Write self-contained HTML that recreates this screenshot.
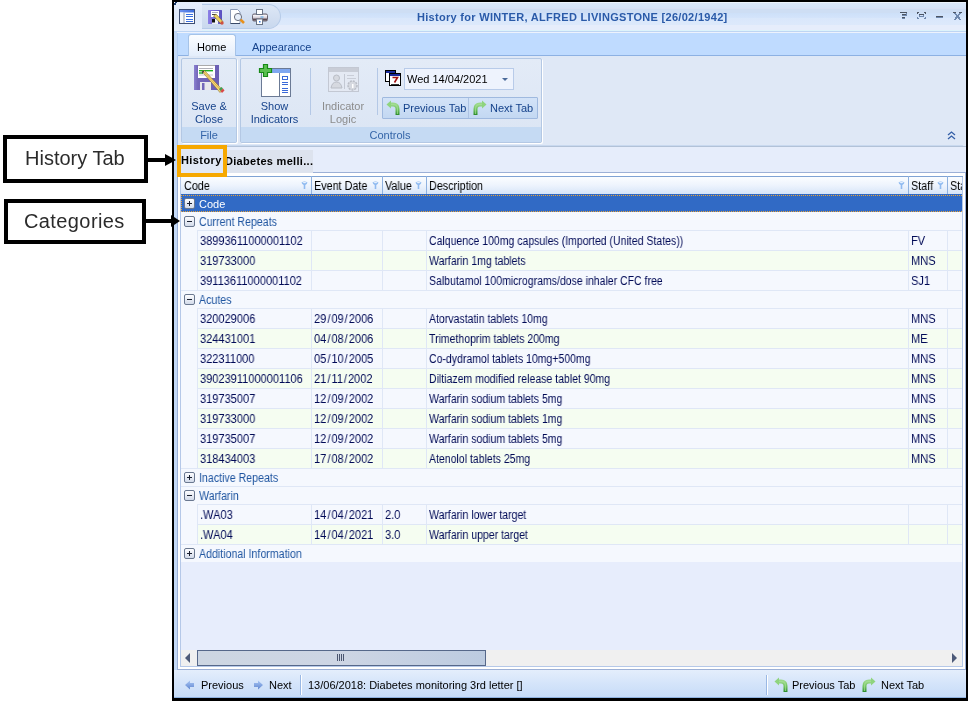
<!DOCTYPE html>
<html><head><meta charset="utf-8">
<style>
*{margin:0;padding:0;box-sizing:border-box}
html,body{width:968px;height:701px;overflow:hidden;background:#fff;font-family:"Liberation Sans",sans-serif;font-size:11px;color:#000}
.a{position:absolute}
.t{position:absolute;white-space:pre;line-height:12px;will-change:transform}
.box{position:absolute;border:4px solid #000;background:#fff}
.lbl{position:absolute;font-size:19px;color:#2b2b2b;white-space:pre;line-height:20px;will-change:transform}
#win{position:absolute;left:172px;top:0;width:796px;height:701px;background:#000}
#title{position:absolute;left:174px;top:2px;width:792px;height:29px;background:linear-gradient(#eef4fd 0,#eef4fd 1px,#dce8fa 1px,#d5e4f9 6px,#dae0f5 6px,#dae0f5 7px,#cedef4 7px,#cedef4 11px,#cde0f9 11px,#d4e4fb 16px,#d9e7fb 16px,#dde9fb 23px,#e6edfb 23px,#e6edfb 28px,#ddf3fb 28px)}
#tabstrip{position:absolute;left:174px;top:31px;width:792px;height:25px;background:#bfdbff;border-top:1px solid #bed5f3;border-bottom:1px solid #8db1e3}
#ribbon{position:absolute;left:174px;top:56px;width:792px;height:90px;background:#dfe8f6}
#tabrow{position:absolute;left:174px;top:146px;width:792px;height:30px;background:#e4ebf7}
#gridarea{position:absolute;left:174px;top:176px;width:792px;height:493px;background:#c5d8f2}
#status{position:absolute;left:174px;top:670px;width:792px;height:28px;background:linear-gradient(#e4eefc,#d4e4fa 14px,#c6dbf7 28px);border-bottom:1px solid #8fb2e0}
.grp{position:absolute;border:1px solid #b4c8e4;border-radius:2px;background:linear-gradient(#e3ebf7,#dbe5f4);box-shadow:1px 1px 0 #fff}
.gcap{position:absolute;left:0;right:0;bottom:0;height:15px;background:#c5daf3;color:#3465a8;text-align:center;line-height:16px;will-change:transform}
.blue{color:#15428b}
.hdr{position:absolute;top:177px;height:17px;background:linear-gradient(#fbfdff,#eef4fd 8px,#d7e5f8 17px)}
.hsep{position:absolute;top:176px;width:1px;height:19px;background:#8fb1df}
.funnel{position:absolute;top:181px;width:7px;height:8px}
.selrow{left:181px;width:781px;height:17px;background:#316ac5;border-top:1px dotted #e8a33a;border-bottom:1px dotted #e8a33a;border-left:1px dotted #e8a33a}
.hl{height:1px;background:#dfe7f6}
.vl{width:1px;height:20px;background:#dfe7f6}
.pm{position:absolute;width:11px;height:11px;border:1px solid #6a7890;border-radius:2px;background:linear-gradient(#fdfdff,#d3dbea)}
.pm .h{position:absolute;left:2px;top:4px;width:5px;height:1px;background:#1a2030}
.pm .v{position:absolute;left:4px;top:2px;width:1px;height:5px;background:#1a2030}
.gt{color:#1f55a0;font-size:12px;transform:scaleX(0.885);transform-origin:0 0}
.dt{color:#000a56;font-size:12px;transform-origin:0 0}
.sl{margin:0 1.1px}
.ht{font-size:12px;transform:scaleX(0.9);transform-origin:0 0;color:#000}
</style></head><body>

<!-- window frame -->
<div id="win"></div>
<div class="a" style="left:174px;top:31px;width:792px;height:667px;background:#c4d9f6"></div>
<div id="title"></div>
<!-- QAT -->
<div class="a" style="left:174px;top:2px;width:28px;height:29px;background:linear-gradient(#e8f0fc,#dfe9f9 14px,#e6effc)"></div>
<div class="a" style="left:202px;top:4px;width:79px;height:25px;border-radius:0 13px 13px 0;border:1px solid #b6cbe8;border-left:none;background:linear-gradient(#dde7f6,#d3dff1 12px,#c9d8ee)"></div>
<!-- app icon -->
<svg class="a" style="left:179px;top:9px" width="17" height="16" viewBox="0 0 17 16">
<defs><linearGradient id="gApp" x1="0" y1="0" x2="1" y2="0"><stop offset="0" stop-color="#6e90ee"/><stop offset="1" stop-color="#3d6ee0"/></linearGradient></defs>
<rect x="0.5" y="0.5" width="15" height="14" fill="#fff" stroke="#3e4e72"/>
<rect x="1" y="1" width="14" height="2.5" fill="url(#gApp)"/>
<rect x="1" y="3.5" width="3.5" height="10.5" fill="#f4f6fa"/>
<line x1="5" y1="3.5" x2="5" y2="14" stroke="#8a96ae"/>
<rect x="7" y="5" width="7" height="1" fill="#3a6fe0"/>
<rect x="7" y="7" width="7" height="1" fill="#3a6fe0"/>
<rect x="7" y="10" width="7" height="1" fill="#3a6fe0"/>
<rect x="7" y="12" width="7" height="1" fill="#3a6fe0"/>
</svg>
<svg class="a" style="left:174px;top:2px" width="3" height="3"><rect x="1" y="0" width="2" height="1" fill="#1c3a6a"/><rect x="0" y="1" width="2" height="2" fill="#1c3a6a"/><rect x="0" y="0" width="1" height="1" fill="#fff"/></svg>
<!-- qat floppy -->
<svg class="a" style="left:207px;top:9px" width="18" height="17" viewBox="0 0 18 17">
<defs><linearGradient id="gF" x1="0" y1="0" x2="1" y2="0"><stop offset="0" stop-color="#8c80e6"/><stop offset="1" stop-color="#5a4ec0"/></linearGradient></defs>
<rect x="1" y="1" width="14" height="14" rx="0.5" fill="url(#gF)"/>
<rect x="4" y="2" width="8" height="6" fill="#fff"/>
<rect x="5" y="3.2" width="6" height="0.8" fill="#9a9ab8"/>
<rect x="5" y="5" width="4" height="1" fill="#444"/>
<rect x="5" y="10" width="6" height="5" fill="#eef0f6"/>
<rect x="5" y="10" width="3" height="3.5" fill="#111"/>
<polygon points="6.5,7 9,5 16,12.5 13.5,14.5" fill="#ecd060" stroke="#5a4a20" stroke-width="0.5"/>
<circle cx="15" cy="14" r="1.7" fill="#d05040"/>
</svg>
<!-- qat preview -->
<svg class="a" style="left:230px;top:9px" width="16" height="16" viewBox="0 0 16 16">
<polygon points="0.5,0.5 7.5,0.5 10,3 10,14.5 0.5,14.5" fill="#fff" stroke="#8a9ab8"/>
<line x1="0.5" y1="14.5" x2="10" y2="14.5" stroke="#3a4a68"/>
<circle cx="8" cy="8" r="3.6" fill="#e6eef9" stroke="#6a7080" stroke-width="1"/>
<line x1="10.6" y1="10.6" x2="14" y2="14" stroke="#e8901a" stroke-width="2.6"/>
</svg>
<!-- qat printer -->
<svg class="a" style="left:252px;top:9px" width="16" height="16" viewBox="0 0 16 16">
<rect x="0.5" y="5" width="15" height="7" rx="1.5" fill="#d8d2da" stroke="#6a6470"/>
<rect x="1" y="6" width="14" height="1.5" fill="#f4f2f6"/>
<rect x="1" y="9.5" width="14" height="2" fill="#5a4a52"/>
<rect x="4.5" y="0.5" width="6" height="5" fill="#fff" stroke="#6a7486"/>
<rect x="8.5" y="7.5" width="3" height="1" fill="#4aa0e8"/>
<rect x="4.5" y="10" width="6" height="5.5" fill="#fff" stroke="#6a7486"/>
<rect x="7" y="12" width="1.5" height="1.5" fill="#3a7ae0"/>
</svg>
<!-- title text -->
<div class="t" style="left:417px;top:11px;font-weight:bold;color:#2a5aa8;font-size:11px;letter-spacing:0.3px">History for WINTER, ALFRED LIVINGSTONE [26/02/1942]</div>
<!-- window buttons -->
<svg class="a" style="left:896px;top:10px" width="70" height="14" viewBox="0 0 70 14" shape-rendering="crispEdges">
<g fill="#4d5563">
<rect x="4" y="2" width="7" height="1"/><rect x="6" y="4" width="4" height="1"/><rect x="6" y="7" width="3" height="1"/>
<rect x="21" y="2" width="2" height="1"/><rect x="21" y="3" width="1" height="1"/><rect x="28" y="2" width="2" height="1"/><rect x="29" y="3" width="1" height="1"/>
<rect x="23" y="4" width="5" height="1"/>
<rect x="40" y="6" width="7" height="1"/>
<rect x="57" y="2" width="3" height="1"/><rect x="63" y="2" width="3" height="1"/>
</g>
<g fill="#6f88ad">
<rect x="10" y="3" width="1" height="3"/><rect x="6" y="5" width="5" height="1"/><rect x="6" y="8" width="3" height="1"/>
<rect x="21" y="7" width="1" height="1"/><rect x="21" y="8" width="2" height="1"/><rect x="29" y="7" width="1" height="1"/><rect x="28" y="8" width="2" height="1"/>
<rect x="23" y="5" width="1" height="2"/><rect x="27" y="5" width="1" height="2"/><rect x="23" y="6" width="5" height="1"/>
<rect x="40" y="7" width="7" height="1"/>
<path d="M58,3 h2 l1.5,2 l1.5,-2 h2 l-2.5,3 l3,4 h-2.5 l-1.5,-2 l-1.5,2 h-2.5 l3,-4 z"/>
</g>
</svg>

<div id="tabstrip"></div>
<!-- left frame strip -->
<div class="a" style="left:177px;top:32px;width:789px;height:1px;background:#edf2fc"></div>
<div class="a" style="left:174px;top:32px;width:3px;height:637px;background:#c4d9f6"></div>
<div class="a" style="left:177px;top:33px;width:1px;height:23px;background:#b0cdf5"></div>
<div class="a" style="left:963px;top:56px;width:3px;height:613px;background:#c8dbf4"></div>
<!-- Home tab -->
<div class="a" style="left:188px;top:34px;width:48px;height:22px;border:1px solid #a6c3e8;border-bottom:none;border-radius:3px 3px 0 0;background:linear-gradient(#fbfdff,#eef4fd 60%,#e3edfb)"></div>
<div class="t" style="left:197px;top:41px">Home</div>
<div class="t blue" style="left:252px;top:41px">Appearance</div>

<div class="a" style="left:178px;top:56px;width:788px;height:90px;background:#dfe8f6"></div>
<div class="a" style="left:177px;top:56px;width:1px;height:90px;background:#a9c5ee"></div>
<!-- File group -->
<div class="grp" style="left:181px;top:58px;width:56px;height:85px"><div class="gcap">File</div></div>
<!-- Controls group -->
<div class="grp" style="left:240px;top:58px;width:302px;height:85px"><div class="gcap" style="padding-right:2px">Controls</div></div>
<!-- save & close icon -->
<svg class="a" style="left:193px;top:64px" width="32" height="32" viewBox="0 0 32 32">
<defs><linearGradient id="gS" x1="0" y1="0" x2="1" y2="0"><stop offset="0" stop-color="#8a80d0"/><stop offset="0.15" stop-color="#7468ba"/><stop offset="1" stop-color="#6a5eb4"/></linearGradient></defs>
<rect x="1" y="1" width="25" height="25" fill="url(#gS)"/>
<rect x="5" y="1" width="17" height="13" fill="#fff"/>
<rect x="5" y="1" width="17" height="1" fill="#aaa"/>
<rect x="6" y="4" width="14" height="1" fill="#b0b0b8"/>
<rect x="6" y="6" width="14" height="1.4" fill="#20b020"/>
<rect x="6" y="8.3" width="4" height="1.4" fill="#20b020"/>
<rect x="6" y="10.5" width="14" height="1" fill="#c8c8d0"/>
<rect x="7" y="18" width="11" height="8" fill="#e8e8ec"/>
<rect x="9" y="19" width="2.5" height="7" fill="#7468ba"/>
<polygon points="9,7.5 11.5,6.5 29.5,26 27,28.5" fill="#f2d878" stroke="#8a6a28" stroke-width="0.6"/>
<line x1="11" y1="8" x2="28" y2="26.5" stroke="#e0a840" stroke-width="0.8"/>
<polygon points="26,25 28.6,23 30,24.6 27.5,27" fill="#40a050"/>
<polygon points="27.5,27 30,24.6 31.5,26.5 29,29" fill="#d84848"/>
<polygon points="9,7.5 11.5,6.5 9.5,10" fill="#333"/>
</svg>
<div class="t blue" style="left:191px;top:100px;line-height:13px;text-align:center;width:36px">Save &amp;
Close</div>

<!-- show indicators icon -->
<svg class="a" style="left:258px;top:63px" width="34" height="34" viewBox="0 0 34 34">
<rect x="3.5" y="5.5" width="29" height="28" fill="#fff" stroke="#6b7a95"/>
<rect x="4" y="6" width="28" height="4" fill="#7fa7f0"/>
<line x1="21.5" y1="10" x2="21.5" y2="33" stroke="#6b7a95"/>
<rect x="24.5" y="13.5" width="5" height="3" fill="#fff" stroke="#3b6ad8"/>
<rect x="24" y="19" width="6" height="1" fill="#3b6ad8"/>
<rect x="24" y="21" width="6" height="1" fill="#3b6ad8"/>
<rect x="24" y="25" width="6" height="1" fill="#3b6ad8"/>
<rect x="24" y="27" width="6" height="1" fill="#3b6ad8"/>
<rect x="24" y="29" width="6" height="1" fill="#3b6ad8"/>
<path d="M5.5,1.5 h4 v4 h4 v4 h-4 v4 h-4 v-4 h-4 v-4 h4 z" fill="#5cc050" stroke="#178a17" stroke-width="1.2"/>
</svg>
<div class="t blue" style="left:249px;top:100px;line-height:13px;text-align:center;width:51px">Show
Indicators</div>
<div class="a" style="left:310px;top:68px;width:1px;height:47px;background:#b4c8e6"></div>
<!-- indicator logic icon -->
<svg class="a" style="left:327px;top:66px" width="34" height="28" viewBox="0 0 34 28">
<rect x="1.5" y="1.5" width="30" height="24" fill="#e4e9f3" stroke="#c3c8d3"/>
<rect x="2" y="2" width="29" height="4" fill="#c9cdd7"/>
<circle cx="9.5" cy="12" r="3" fill="#d6d9e0" stroke="#b9bdc6"/>
<path d="M4,22 q1,-6 5.5,-6 q4.5,0 5.5,6 z" fill="#d6d9e0" stroke="#b9bdc6"/>
<line x1="17.5" y1="8" x2="17.5" y2="23" stroke="#c3c8d3"/>
<rect x="20" y="9" width="7" height="1" fill="#c9cdd7"/>
<rect x="20" y="12" width="9" height="1" fill="#c9cdd7"/>
<circle cx="25.5" cy="19.5" r="4.5" fill="#d6d9e0" stroke="#b9bdc6" stroke-width="1.5" stroke-dasharray="2 1"/>
<rect x="25" y="18" width="1.5" height="4" fill="#fff"/>
</svg>
<div class="t" style="left:320px;top:100px;line-height:13px;text-align:center;width:46px;color:#8c8c8c">Indicator
Logic</div>
<div class="a" style="left:377px;top:68px;width:1px;height:47px;background:#b4c8e6"></div>
<!-- calendar icon -->
<svg class="a" style="left:385px;top:70px" width="16" height="16" viewBox="0 0 16 16">
<rect x="0.5" y="0.5" width="10" height="11" fill="#fff" stroke="#000"/>
<rect x="1" y="1" width="9" height="2" fill="#1a2a9a"/>
<rect x="4.5" y="3.5" width="11" height="12" fill="#fff" stroke="#000"/>
<rect x="5" y="4" width="10" height="2" fill="#1a2a9a"/>
<path d="M7.5,7.5 h5 l-3,5" fill="none" stroke="#a01010" stroke-width="1.6"/>
<rect x="6" y="14" width="8" height="0.8" fill="#000"/>
</svg>
<div class="a" style="left:404px;top:68px;width:110px;height:22px;border:1px solid #b8cbe9;background:#eef3fd"></div>
<div class="t" style="left:407px;top:73px">Wed 14/04/2021</div>
<svg class="a" style="left:502px;top:78px" width="6" height="3"><polygon points="0,0 6,0 3,3" fill="#4a6a9a"/></svg>
<!-- prev/next tab button group -->
<div class="a" style="left:382px;top:97px;width:156px;height:22px;border:1px solid #9fb9df;background:linear-gradient(#d3e3f8,#c3d8f2);border-radius:1px"></div>
<div class="a" style="left:468px;top:98px;width:1px;height:20px;background:#adc3e3"></div>
<svg class="a" style="left:386px;top:100px" width="14" height="16" viewBox="0 0 14 16">
<defs><linearGradient id="gA" x1="0" y1="0" x2="0" y2="1"><stop offset="0" stop-color="#9ad88a"/><stop offset="0.5" stop-color="#6cc05c"/><stop offset="1" stop-color="#2a8a2a"/></linearGradient></defs>
<path d="M11.5,15 V9 Q11.5,4.5 7,4.5 H4.5" fill="none" stroke="url(#gA)" stroke-width="4"/>
<path d="M11.5,14 V9 Q11.5,4.5 7,4.5 H5" fill="none" stroke="#a8e098" stroke-width="1.2" opacity="0.7"/>
<polygon points="0.5,4.5 5,0.5 5,8.5" fill="#8fd47e"/>
</svg>
<div class="t blue" style="left:403px;top:102px">Previous Tab</div>
<svg class="a" style="left:473px;top:100px" width="14" height="16" viewBox="0 0 14 16">
<defs><linearGradient id="gB" x1="0" y1="0" x2="0" y2="1"><stop offset="0" stop-color="#9ad88a"/><stop offset="0.5" stop-color="#6cc05c"/><stop offset="1" stop-color="#2a8a2a"/></linearGradient></defs>
<path d="M2.5,15 V9 Q2.5,4.5 7,4.5 H9.5" fill="none" stroke="url(#gB)" stroke-width="4"/>
<path d="M2.5,14 V9 Q2.5,4.5 7,4.5 H9" fill="none" stroke="#a8e098" stroke-width="1.2" opacity="0.7"/>
<polygon points="13.5,4.5 9,0.5 9,8.5" fill="#8fd47e"/>
</svg>
<div class="t blue" style="left:490px;top:102px">Next Tab</div>
<!-- collapse chevron -->
<svg class="a" style="left:947px;top:131px" width="9" height="9" viewBox="0 0 9 9">
<path d="M1,4 L4.5,1 L8,4 M1,8 L4.5,5 L8,8" fill="none" stroke="#3560a8" stroke-width="1.3"/>
</svg>
<!-- ribbon bottom -->
<div class="a" style="left:178px;top:145px;width:785px;height:1px;background:#c9d9ef"></div>

<!-- tab row -->
<div class="a" style="left:177px;top:146px;width:789px;height:1px;background:#b2c2d8"></div>
<div class="a" style="left:177px;top:147px;width:789px;height:25px;background:#e6edfb"></div>
<div class="a" style="left:177px;top:172px;width:789px;height:498px;background:#fff;border:1px solid #9cb0d6"></div>
<div class="a" style="left:181px;top:149px;width:46px;height:25px;background:#e1e8f5"></div>
<div class="a" style="left:227px;top:150px;width:86px;height:23px;background:#dde3ee"></div>
<div class="t" style="left:181px;top:154px;font-weight:bold;letter-spacing:0.4px">History</div>
<div class="t" style="left:225px;top:155px;font-weight:bold;letter-spacing:0.3px">Diabetes melli...</div>
<!-- grid -->
<div class="a" style="left:180px;top:176px;width:783px;height:491px;background:#e7edfc;border:1px solid #b5c8e8"></div>
<div class="a" style="left:181px;top:177px;width:781px;height:385px;background:#f5f8fe"></div>
<!-- header -->
<div class="a" style="left:180px;top:176px;width:783px;height:1px;background:#7fa3d4"></div>
<div class="hdr" style="left:181px;width:781px"></div>
<div class="hsep" style="left:311px"></div>
<div class="hsep" style="left:382px"></div>
<div class="hsep" style="left:426px"></div>
<div class="hsep" style="left:908px"></div>
<div class="hsep" style="left:947px"></div>
<div class="t ht" style="left:184px;top:180px">Code</div>
<div class="t ht" style="left:314px;top:180px">Event Date</div>
<div class="t ht" style="left:385px;top:180px">Value</div>
<div class="t ht" style="left:429px;top:180px">Description</div>
<div class="t ht" style="left:911px;top:180px">Staff</div>
<div class="a" style="left:948px;top:177px;width:14px;height:17px;overflow:hidden"><div class="t ht" style="left:2px;top:3px">Status</div></div>
<svg class="funnel" style="left:301px" viewBox="0 0 7 8"><path d="M0.5,1.5 Q3.5,-0.5 6.5,1.5 Q6,3 4.3,4 V8 H2.7 V4 Q1,3 0.5,1.5 Z" fill="#8fbaf0"/><ellipse cx="3.5" cy="1.6" rx="2" ry="0.7" fill="#eaf3ff"/></svg>
<svg class="funnel" style="left:372px" viewBox="0 0 7 8"><path d="M0.5,1.5 Q3.5,-0.5 6.5,1.5 Q6,3 4.3,4 V8 H2.7 V4 Q1,3 0.5,1.5 Z" fill="#8fbaf0"/><ellipse cx="3.5" cy="1.6" rx="2" ry="0.7" fill="#eaf3ff"/></svg>
<svg class="funnel" style="left:415px" viewBox="0 0 7 8"><path d="M0.5,1.5 Q3.5,-0.5 6.5,1.5 Q6,3 4.3,4 V8 H2.7 V4 Q1,3 0.5,1.5 Z" fill="#8fbaf0"/><ellipse cx="3.5" cy="1.6" rx="2" ry="0.7" fill="#eaf3ff"/></svg>
<svg class="funnel" style="left:898px" viewBox="0 0 7 8"><path d="M0.5,1.5 Q3.5,-0.5 6.5,1.5 Q6,3 4.3,4 V8 H2.7 V4 Q1,3 0.5,1.5 Z" fill="#8fbaf0"/><ellipse cx="3.5" cy="1.6" rx="2" ry="0.7" fill="#eaf3ff"/></svg>
<svg class="funnel" style="left:937px" viewBox="0 0 7 8"><path d="M0.5,1.5 Q3.5,-0.5 6.5,1.5 Q6,3 4.3,4 V8 H2.7 V4 Q1,3 0.5,1.5 Z" fill="#8fbaf0"/><ellipse cx="3.5" cy="1.6" rx="2" ry="0.7" fill="#eaf3ff"/></svg>

<div class="a" style="left:181px;top:194px;width:781px;height:18px;background:#316ac5"></div>
<div class="a selrow" style="top:195px"></div>
<div class="pm" style="left:184px;top:198px"><div class="h"></div><div class="v"></div></div>
<div class="t" style="left:199px;top:198px;color:#fff">Code</div>
<div class="pm" style="left:184px;top:216px"><div class="h"></div></div>
<div class="t gt" style="left:199px;top:216px">Current Repeats</div>
<div class="a" style="left:198px;top:231px;width:764px;height:19px;background:#f5f8fe"></div>
<div class="a hl" style="left:197px;top:230px;width:765px"></div>
<div class="a vl" style="left:197px;top:230px"></div>
<div class="a vl" style="left:311px;top:230px"></div>
<div class="a vl" style="left:382px;top:230px"></div>
<div class="a vl" style="left:426px;top:230px"></div>
<div class="a vl" style="left:908px;top:230px"></div>
<div class="a vl" style="left:947px;top:230px"></div>
<div class="t dt" style="left:200px;top:235px;transform:scaleX(0.92)">38993611000001102</div>
<div class="t dt" style="left:429px;top:235px;transform:scaleX(0.876)">Calquence 100mg capsules (Imported (United States))</div>
<div class="t dt" style="left:911px;top:235px;transform:scaleX(0.92)">FV</div>
<div class="a" style="left:198px;top:251px;width:764px;height:19px;background:#f5fdf1"></div>
<div class="a hl" style="left:197px;top:250px;width:765px"></div>
<div class="a vl" style="left:197px;top:250px"></div>
<div class="a vl" style="left:311px;top:250px"></div>
<div class="a vl" style="left:382px;top:250px"></div>
<div class="a vl" style="left:426px;top:250px"></div>
<div class="a vl" style="left:908px;top:250px"></div>
<div class="a vl" style="left:947px;top:250px"></div>
<div class="t dt" style="left:200px;top:255px;transform:scaleX(0.92)">319733000</div>
<div class="t dt" style="left:429px;top:255px;transform:scaleX(0.876)">Warfarin 1mg tablets</div>
<div class="t dt" style="left:911px;top:255px;transform:scaleX(0.92)">MNS</div>
<div class="a" style="left:198px;top:271px;width:764px;height:19px;background:#f5f8fe"></div>
<div class="a hl" style="left:197px;top:270px;width:765px"></div>
<div class="a vl" style="left:197px;top:270px"></div>
<div class="a vl" style="left:311px;top:270px"></div>
<div class="a vl" style="left:382px;top:270px"></div>
<div class="a vl" style="left:426px;top:270px"></div>
<div class="a vl" style="left:908px;top:270px"></div>
<div class="a vl" style="left:947px;top:270px"></div>
<div class="t dt" style="left:200px;top:275px;transform:scaleX(0.92)">39113611000001102</div>
<div class="t dt" style="left:429px;top:275px;transform:scaleX(0.876)">Salbutamol 100micrograms/dose inhaler CFC free</div>
<div class="t dt" style="left:911px;top:275px;transform:scaleX(0.92)">SJ1</div>
<div class="a hl" style="left:181px;top:290px;width:781px"></div>
<div class="pm" style="left:184px;top:294px"><div class="h"></div></div>
<div class="t gt" style="left:199px;top:294px">Acutes</div>
<div class="a" style="left:198px;top:309px;width:764px;height:19px;background:#f5f8fe"></div>
<div class="a hl" style="left:197px;top:308px;width:765px"></div>
<div class="a vl" style="left:197px;top:308px"></div>
<div class="a vl" style="left:311px;top:308px"></div>
<div class="a vl" style="left:382px;top:308px"></div>
<div class="a vl" style="left:426px;top:308px"></div>
<div class="a vl" style="left:908px;top:308px"></div>
<div class="a vl" style="left:947px;top:308px"></div>
<div class="t dt" style="left:200px;top:313px;transform:scaleX(0.92)">320029006</div>
<div class="t dt" style="left:314px;top:313px;transform:scaleX(0.92)">29<span class="sl">/</span>09<span class="sl">/</span>2006</div>
<div class="t dt" style="left:429px;top:313px;transform:scaleX(0.876)">Atorvastatin tablets 10mg</div>
<div class="t dt" style="left:911px;top:313px;transform:scaleX(0.92)">MNS</div>
<div class="a" style="left:198px;top:329px;width:764px;height:19px;background:#f5fdf1"></div>
<div class="a hl" style="left:197px;top:328px;width:765px"></div>
<div class="a vl" style="left:197px;top:328px"></div>
<div class="a vl" style="left:311px;top:328px"></div>
<div class="a vl" style="left:382px;top:328px"></div>
<div class="a vl" style="left:426px;top:328px"></div>
<div class="a vl" style="left:908px;top:328px"></div>
<div class="a vl" style="left:947px;top:328px"></div>
<div class="t dt" style="left:200px;top:333px;transform:scaleX(0.92)">324431001</div>
<div class="t dt" style="left:314px;top:333px;transform:scaleX(0.92)">04<span class="sl">/</span>08<span class="sl">/</span>2006</div>
<div class="t dt" style="left:429px;top:333px;transform:scaleX(0.876)">Trimethoprim tablets 200mg</div>
<div class="t dt" style="left:911px;top:333px;transform:scaleX(0.92)">ME</div>
<div class="a" style="left:198px;top:349px;width:764px;height:19px;background:#f5f8fe"></div>
<div class="a hl" style="left:197px;top:348px;width:765px"></div>
<div class="a vl" style="left:197px;top:348px"></div>
<div class="a vl" style="left:311px;top:348px"></div>
<div class="a vl" style="left:382px;top:348px"></div>
<div class="a vl" style="left:426px;top:348px"></div>
<div class="a vl" style="left:908px;top:348px"></div>
<div class="a vl" style="left:947px;top:348px"></div>
<div class="t dt" style="left:200px;top:353px;transform:scaleX(0.92)">322311000</div>
<div class="t dt" style="left:314px;top:353px;transform:scaleX(0.92)">05<span class="sl">/</span>10<span class="sl">/</span>2005</div>
<div class="t dt" style="left:429px;top:353px;transform:scaleX(0.876)">Co-dydramol tablets 10mg+500mg</div>
<div class="t dt" style="left:911px;top:353px;transform:scaleX(0.92)">MNS</div>
<div class="a" style="left:198px;top:369px;width:764px;height:19px;background:#f5fdf1"></div>
<div class="a hl" style="left:197px;top:368px;width:765px"></div>
<div class="a vl" style="left:197px;top:368px"></div>
<div class="a vl" style="left:311px;top:368px"></div>
<div class="a vl" style="left:382px;top:368px"></div>
<div class="a vl" style="left:426px;top:368px"></div>
<div class="a vl" style="left:908px;top:368px"></div>
<div class="a vl" style="left:947px;top:368px"></div>
<div class="t dt" style="left:200px;top:373px;transform:scaleX(0.92)">39023911000001106</div>
<div class="t dt" style="left:314px;top:373px;transform:scaleX(0.92)">21<span class="sl">/</span>11<span class="sl">/</span>2002</div>
<div class="t dt" style="left:429px;top:373px;transform:scaleX(0.876)">Diltiazem modified release tablet 90mg</div>
<div class="t dt" style="left:911px;top:373px;transform:scaleX(0.92)">MNS</div>
<div class="a" style="left:198px;top:389px;width:764px;height:19px;background:#f5f8fe"></div>
<div class="a hl" style="left:197px;top:388px;width:765px"></div>
<div class="a vl" style="left:197px;top:388px"></div>
<div class="a vl" style="left:311px;top:388px"></div>
<div class="a vl" style="left:382px;top:388px"></div>
<div class="a vl" style="left:426px;top:388px"></div>
<div class="a vl" style="left:908px;top:388px"></div>
<div class="a vl" style="left:947px;top:388px"></div>
<div class="t dt" style="left:200px;top:393px;transform:scaleX(0.92)">319735007</div>
<div class="t dt" style="left:314px;top:393px;transform:scaleX(0.92)">12<span class="sl">/</span>09<span class="sl">/</span>2002</div>
<div class="t dt" style="left:429px;top:393px;transform:scaleX(0.876)">Warfarin sodium tablets 5mg</div>
<div class="t dt" style="left:911px;top:393px;transform:scaleX(0.92)">MNS</div>
<div class="a" style="left:198px;top:409px;width:764px;height:19px;background:#f5fdf1"></div>
<div class="a hl" style="left:197px;top:408px;width:765px"></div>
<div class="a vl" style="left:197px;top:408px"></div>
<div class="a vl" style="left:311px;top:408px"></div>
<div class="a vl" style="left:382px;top:408px"></div>
<div class="a vl" style="left:426px;top:408px"></div>
<div class="a vl" style="left:908px;top:408px"></div>
<div class="a vl" style="left:947px;top:408px"></div>
<div class="t dt" style="left:200px;top:413px;transform:scaleX(0.92)">319733000</div>
<div class="t dt" style="left:314px;top:413px;transform:scaleX(0.92)">12<span class="sl">/</span>09<span class="sl">/</span>2002</div>
<div class="t dt" style="left:429px;top:413px;transform:scaleX(0.876)">Warfarin sodium tablets 1mg</div>
<div class="t dt" style="left:911px;top:413px;transform:scaleX(0.92)">MNS</div>
<div class="a" style="left:198px;top:429px;width:764px;height:19px;background:#f5f8fe"></div>
<div class="a hl" style="left:197px;top:428px;width:765px"></div>
<div class="a vl" style="left:197px;top:428px"></div>
<div class="a vl" style="left:311px;top:428px"></div>
<div class="a vl" style="left:382px;top:428px"></div>
<div class="a vl" style="left:426px;top:428px"></div>
<div class="a vl" style="left:908px;top:428px"></div>
<div class="a vl" style="left:947px;top:428px"></div>
<div class="t dt" style="left:200px;top:433px;transform:scaleX(0.92)">319735007</div>
<div class="t dt" style="left:314px;top:433px;transform:scaleX(0.92)">12<span class="sl">/</span>09<span class="sl">/</span>2002</div>
<div class="t dt" style="left:429px;top:433px;transform:scaleX(0.876)">Warfarin sodium tablets 5mg</div>
<div class="t dt" style="left:911px;top:433px;transform:scaleX(0.92)">MNS</div>
<div class="a" style="left:198px;top:449px;width:764px;height:19px;background:#f5fdf1"></div>
<div class="a hl" style="left:197px;top:448px;width:765px"></div>
<div class="a vl" style="left:197px;top:448px"></div>
<div class="a vl" style="left:311px;top:448px"></div>
<div class="a vl" style="left:382px;top:448px"></div>
<div class="a vl" style="left:426px;top:448px"></div>
<div class="a vl" style="left:908px;top:448px"></div>
<div class="a vl" style="left:947px;top:448px"></div>
<div class="t dt" style="left:200px;top:453px;transform:scaleX(0.92)">318434003</div>
<div class="t dt" style="left:314px;top:453px;transform:scaleX(0.92)">17<span class="sl">/</span>08<span class="sl">/</span>2002</div>
<div class="t dt" style="left:429px;top:453px;transform:scaleX(0.876)">Atenolol tablets 25mg</div>
<div class="t dt" style="left:911px;top:453px;transform:scaleX(0.92)">MNS</div>
<div class="a hl" style="left:181px;top:468px;width:781px"></div>
<div class="pm" style="left:184px;top:472px"><div class="h"></div><div class="v"></div></div>
<div class="t gt" style="left:199px;top:472px">Inactive Repeats</div>
<div class="a hl" style="left:181px;top:486px;width:781px"></div>
<div class="pm" style="left:184px;top:490px"><div class="h"></div></div>
<div class="t gt" style="left:199px;top:490px">Warfarin</div>
<div class="a" style="left:198px;top:505px;width:764px;height:19px;background:#f5f8fe"></div>
<div class="a hl" style="left:197px;top:504px;width:765px"></div>
<div class="a vl" style="left:197px;top:504px"></div>
<div class="a vl" style="left:311px;top:504px"></div>
<div class="a vl" style="left:382px;top:504px"></div>
<div class="a vl" style="left:426px;top:504px"></div>
<div class="a vl" style="left:908px;top:504px"></div>
<div class="a vl" style="left:947px;top:504px"></div>
<div class="t dt" style="left:200px;top:509px;transform:scaleX(0.92)">.WA03</div>
<div class="t dt" style="left:314px;top:509px;transform:scaleX(0.92)">14<span class="sl">/</span>04<span class="sl">/</span>2021</div>
<div class="t dt" style="left:385px;top:509px;transform:scaleX(0.92)">2.0</div>
<div class="t dt" style="left:429px;top:509px;transform:scaleX(0.876)">Warfarin lower target</div>
<div class="a" style="left:198px;top:525px;width:764px;height:19px;background:#f5fdf1"></div>
<div class="a hl" style="left:197px;top:524px;width:765px"></div>
<div class="a vl" style="left:197px;top:524px"></div>
<div class="a vl" style="left:311px;top:524px"></div>
<div class="a vl" style="left:382px;top:524px"></div>
<div class="a vl" style="left:426px;top:524px"></div>
<div class="a vl" style="left:908px;top:524px"></div>
<div class="a vl" style="left:947px;top:524px"></div>
<div class="t dt" style="left:200px;top:529px;transform:scaleX(0.92)">.WA04</div>
<div class="t dt" style="left:314px;top:529px;transform:scaleX(0.92)">14<span class="sl">/</span>04<span class="sl">/</span>2021</div>
<div class="t dt" style="left:385px;top:529px;transform:scaleX(0.92)">3.0</div>
<div class="t dt" style="left:429px;top:529px;transform:scaleX(0.876)">Warfarin upper target</div>
<div class="a hl" style="left:181px;top:544px;width:781px"></div>
<div class="pm" style="left:184px;top:548px"><div class="h"></div><div class="v"></div></div>
<div class="t gt" style="left:199px;top:548px">Additional Information</div>

<!-- scrollbar -->
<div class="a" style="left:181px;top:650px;width:781px;height:16px;background:#f0f0f0"></div>
<svg class="a" style="left:185px;top:653px" width="6" height="10"><polygon points="5,0 5,10 0,5" fill="#4d5a78"/></svg>
<svg class="a" style="left:952px;top:653px" width="6" height="10"><polygon points="0,0 0,10 5,5" fill="#4d5a78"/></svg>
<div class="a" style="left:197px;top:650px;width:289px;height:16px;border:1px solid #56688a;background:linear-gradient(90deg,#cdd6e2,#cdd5e4 50%,#bccbe0)"></div>
<svg class="a" style="left:337px;top:654px" width="8" height="7"><g fill="#4a5570"><rect x="0" y="0" width="1" height="7"/><rect x="2" y="0" width="1" height="7"/><rect x="4" y="0" width="1" height="7"/><rect x="6" y="0" width="1" height="7"/></g></svg>

<!-- status bar -->
<div id="status"></div>
<svg class="a" style="left:185px;top:680px" width="10" height="10" viewBox="0 0 10 10"><defs><linearGradient id="gC" x1="0" y1="0" x2="0" y2="1"><stop offset="0" stop-color="#a9c6f4"/><stop offset="1" stop-color="#5f86d0"/></linearGradient></defs><polygon points="0,5 5,0.5 5,3 9,3 9,7 5,7 5,9.5" fill="url(#gC)"/></svg>
<div class="t" style="left:201px;top:679px">Previous</div>
<svg class="a" style="left:254px;top:680px" width="10" height="10" viewBox="0 0 10 10"><defs><linearGradient id="gD" x1="0" y1="0" x2="0" y2="1"><stop offset="0" stop-color="#a9c6f4"/><stop offset="1" stop-color="#5f86d0"/></linearGradient></defs><polygon points="9,5 4,0.5 4,3 0,3 0,7 4,7 4,9.5" fill="url(#gD)"/></svg>
<div class="t" style="left:269px;top:679px">Next</div>
<div class="a" style="left:300px;top:675px;width:1px;height:20px;background:#9ab8e4"></div>
<div class="a" style="left:301px;top:675px;width:1px;height:20px;background:#fff"></div>
<div class="t" style="left:308px;top:679px">13/06/2018: Diabetes monitoring 3rd letter []</div>
<div class="a" style="left:766px;top:675px;width:1px;height:20px;background:#9ab8e4"></div>
<div class="a" style="left:767px;top:675px;width:1px;height:20px;background:#fff"></div>
<svg class="a" style="left:774px;top:677px" width="14" height="16" viewBox="0 0 14 16">
<defs><linearGradient id="gA" x1="0" y1="0" x2="0" y2="1"><stop offset="0" stop-color="#9ad88a"/><stop offset="0.5" stop-color="#6cc05c"/><stop offset="1" stop-color="#2a8a2a"/></linearGradient></defs>
<path d="M11.5,15 V9 Q11.5,4.5 7,4.5 H4.5" fill="none" stroke="url(#gA)" stroke-width="4"/>
<path d="M11.5,14 V9 Q11.5,4.5 7,4.5 H5" fill="none" stroke="#a8e098" stroke-width="1.2" opacity="0.7"/>
<polygon points="0.5,4.5 5,0.5 5,8.5" fill="#8fd47e"/>
</svg>
<div class="t" style="left:792px;top:679px">Previous Tab</div>
<svg class="a" style="left:862px;top:677px" width="14" height="16" viewBox="0 0 14 16">
<defs><linearGradient id="gB" x1="0" y1="0" x2="0" y2="1"><stop offset="0" stop-color="#9ad88a"/><stop offset="0.5" stop-color="#6cc05c"/><stop offset="1" stop-color="#2a8a2a"/></linearGradient></defs>
<path d="M2.5,15 V9 Q2.5,4.5 7,4.5 H9.5" fill="none" stroke="url(#gB)" stroke-width="4"/>
<path d="M2.5,14 V9 Q2.5,4.5 7,4.5 H9" fill="none" stroke="#a8e098" stroke-width="1.2" opacity="0.7"/>
<polygon points="13.5,4.5 9,0.5 9,8.5" fill="#8fd47e"/>
</svg>
<div class="t" style="left:881px;top:679px">Next Tab</div>

<!-- orange highlight -->
<div class="a" style="left:177px;top:145px;width:50px;height:32px;border:4px solid #f6a800"></div>

<!-- annotations -->
<div class="box" style="left:3px;top:135px;width:145px;height:48px"></div>
<div class="lbl" style="left:25px;top:148px;font-size:20px">History Tab</div>
<div class="a" style="left:148px;top:158px;width:18px;height:4px;background:#000"></div>
<svg class="a" style="left:164px;top:153px" width="14" height="14"><polygon points="1,1 12,7 1,13" fill="#000"/></svg>

<div class="box" style="left:4px;top:199px;width:142px;height:45px"></div>
<div class="lbl" style="left:24px;top:211px;font-size:20px;letter-spacing:0.4px">Categories</div>
<div class="a" style="left:146px;top:219px;width:26px;height:4px;background:#000"></div>
<svg class="a" style="left:170px;top:214px" width="12" height="14"><polygon points="1,1 10,7 1,13" fill="#000"/></svg>

</body></html>
